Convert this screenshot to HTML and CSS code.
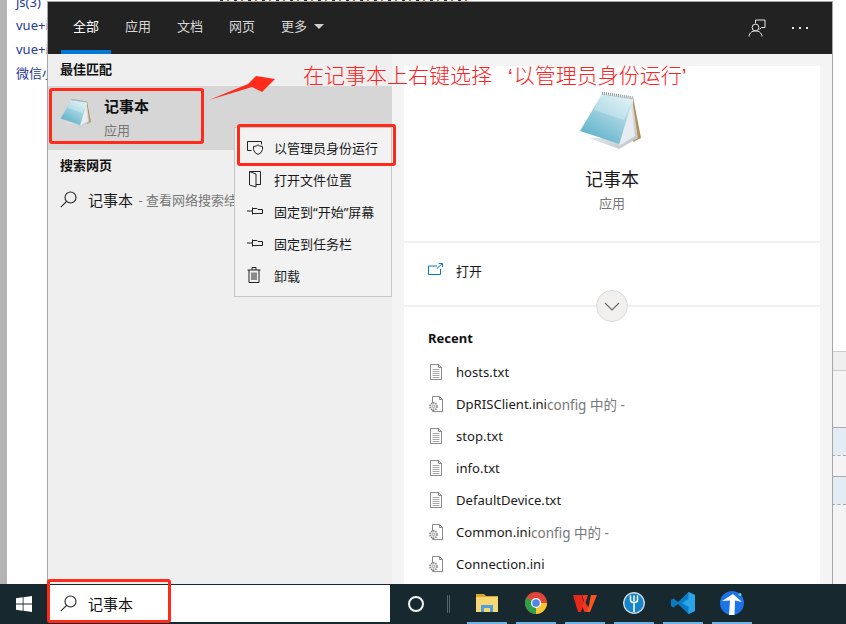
FILE: index.html
```html
<!DOCTYPE html>
<html lang="zh-CN">
<head>
<meta charset="utf-8">
<title>记事本</title>
<link rel="stylesheet" href="styles.css">
</head>
<body>
<svg class="defs" aria-hidden="true">
  <defs>
    <linearGradient id="pad" x1="0.85" y1="0" x2="0.2" y2="1">
      <stop offset="0" stop-color="#d5edf3"/>
      <stop offset="0.45" stop-color="#9dd0df"/>
      <stop offset="1" stop-color="#5aaec8"/>
    </linearGradient>
    <linearGradient id="sheet" x1="0" y1="0" x2="1" y2="1">
      <stop offset="0" stop-color="#ffffff"/>
      <stop offset="1" stop-color="#b9c2c7"/>
    </linearGradient>
    <symbol id="notepad" viewBox="10 12 62 58">
      <path d="M64 17 L72 58 L64 62 Z" fill="#b08f50"/>
      <path d="M63 18 L69 58 L50 69 L20 58 L46 58 Z" fill="url(#sheet)"/>
      <path d="M62 24 L66 56 L50 66 Z" fill="#e6ecef"/>
      <path d="M33 14 L64 19 L50 64 Q30 57 11 51 Z" fill="url(#pad)"/>
      <path d="M33 14 L64 19 L55 40 L25 30 Z" fill="#ffffff" opacity=".28"/>
      <path d="M33 13 L64 18" stroke="#8c9296" stroke-width="3" stroke-dasharray="1 1"/>
    </symbol>
    <symbol id="doc" viewBox="0 0 14 16">
      <path d="M1.5 .5H9.500L12.500 3.500V15.500H1.500Z M9.500 .5V3.500H12.500" fill="#fff" stroke="#8b8b8b"/>
      <path d="M3.500 5.500H10.500M3.500 7.500H10.500M3.500 9.500H10.500M3.500 11.500H10.500M3.500 13.500H10.500" stroke="#a8a8a8"/>
    </symbol>
    <symbol id="cfg" viewBox="0 0 16 16">
      <path d="M4.500 .5H11.500L14.500 3.500V15.500H4.500Z M11.500 .5V3.500H14.500" fill="#fff" stroke="#8b8b8b"/>
      <circle cx="5.500" cy="10.500" r="3.600" fill="#e3e3e3" stroke="#8a8a8a" stroke-width="1.600" stroke-dasharray="1.400 .9"/>
      <circle cx="5.500" cy="10.500" r="1.200" fill="#fff" stroke="#8a8a8a" stroke-width=".7"/>
    </symbol>
    <symbol id="search" viewBox="0 0 17 17">
      <circle cx="10.500" cy="6.500" r="5.500" fill="none" stroke="currentColor" stroke-width="1.100"/>
      <path d="M6.600 10.400 L.8 16.200" stroke="currentColor" stroke-width="1.100"/>
    </symbol>
    <symbol id="pin" viewBox="0 0 16 16">
      <path d="M0 8H5.500M5.500 4.500V11.500M5.500 5.500H10L11 6.500H15.500V10.500H11L10 10.500H5.500" fill="none" stroke="#222" stroke-width="1"/>
    </symbol>
  </defs>
</svg>

<div class="screen">
  <div class="desktop">
    <div class="behind-top"></div>
    <div class="behind-left">
      <span class="behind-link first">js(3)</span>
      <span class="behind-link">vue+i</span>
      <span class="behind-link">vue+i</span>
      <span class="behind-link">微信小</span>
    </div>
    <div class="behind-right">
      <div class="band-head"></div>
      <div class="band-blue"></div>
      <div class="band-blue second"></div>
    </div>

    <section class="win">
      <header class="win-head">
        <nav class="tabs">
          <span class="tab active">全部</span>
          <span class="tab">应用</span>
          <span class="tab">文档</span>
          <span class="tab">网页</span>
          <span class="tab more">更多<i class="caret"></i></span>
        </nav>
        <div class="head-actions">
          <svg class="feedback" viewBox="0 0 18 18" width="18" height="18">
            <path d="M7.500 4.500V1H17V8.500H13.500L11.500 10.500" fill="none" stroke="#e6e6e6" stroke-width="1"/>
            <circle cx="7.500" cy="8.500" r="3.400" fill="#222" stroke="#e6e6e6" stroke-width="1"/>
            <path d="M1 17.500C1.500 13.500 4 12 7.500 12S13.500 13.500 14 17.500" fill="none" stroke="#e6e6e6" stroke-width="1"/>
          </svg>
          <span class="dots"><i></i><i></i><i></i></span>
        </div>
      </header>
      <div class="win-body">
        <aside class="left">
          <h2 class="left-title">最佳匹配</h2>
          <div class="best">
            <svg class="best-icon"><use href="#notepad"/></svg>
            <div class="best-text">
              <strong>记事本</strong>
              <span>应用</span>
            </div>
          </div>
          <h2 class="left-title web">搜索网页</h2>
          <div class="web-row">
            <svg class="search-icon"><use href="#search"/></svg>
            <span class="web-name">记事本</span><span class="web-sub"> - 查看网络搜索结果</span>
          </div>
        </aside>
        <main class="right">
          <div class="card">
            <div class="hero">
              <svg class="hero-icon"><use href="#notepad"/></svg>
              <div class="hero-name">记事本</div>
              <div class="hero-sub">应用</div>
            </div>
            <div class="open-row">
              <svg class="open-icon" viewBox="0 0 15 12" width="15" height="12">
                <path d="M9 3H.5V11.500H12.500V6" fill="none" stroke="#0078d4" stroke-width="1"/>
                <path d="M9 5.500L14 .7M10.800 .5H14.500V4.200" fill="none" stroke="#0078d4" stroke-width="1"/>
              </svg>
              <span>打开</span>
              <div class="expand">
                <svg viewBox="0 0 16 9" width="16" height="9"><path d="M1 1L8 8L15 1" fill="none" stroke="#666" stroke-width="1.100"/></svg>
              </div>
            </div>
            <div class="recent">
              <h3>Recent</h3>
              <ul class="files">
                <li><svg class="fi"><use href="#doc"/></svg><span>hosts.txt</span></li>
                <li><svg class="fi"><use href="#cfg"/></svg><span>DpRISClient.ini</span><em>config 中的 -</em></li>
                <li><svg class="fi"><use href="#doc"/></svg><span>stop.txt</span></li>
                <li><svg class="fi"><use href="#doc"/></svg><span>info.txt</span></li>
                <li><svg class="fi"><use href="#doc"/></svg><span>DefaultDevice.txt</span></li>
                <li><svg class="fi"><use href="#cfg"/></svg><span>Common.ini</span><em>config 中的 -</em></li>
                <li><svg class="fi"><use href="#cfg"/></svg><span>Connection.ini</span></li>
              </ul>
            </div>
          </div>
        </main>
      </div>
    </section>

    <div class="menu">
      <div class="menu-item">
        <svg viewBox="0 0 16 16" width="16" height="16"><path d="M4.500 11.500H.5V2.500H14.500V5.500" fill="none" stroke="#222"/><path d="M6.500 7.500Q9.500 7.500 11 5.800Q12.500 7.500 15.500 7.500V10.500Q15 14 11 15.500Q7 14 6.500 10.500Z" fill="#f2f2f2" stroke="#222"/></svg>
        <span>以管理员身份运行</span>
      </div>
      <div class="menu-item">
        <svg viewBox="0 0 16 18" width="16" height="18"><path d="M2.500 1.500H13.500V14.500H9V17L2.500 15Z M2.500 1.500L9 4V15" fill="none" stroke="#222"/></svg>
        <span>打开文件位置</span>
      </div>
      <div class="menu-item">
        <svg width="16" height="16"><use href="#pin"/></svg>
        <span>固定到“开始”屏幕</span>
      </div>
      <div class="menu-item">
        <svg width="16" height="16"><use href="#pin"/></svg>
        <span>固定到任务栏</span>
      </div>
      <div class="menu-item">
        <svg viewBox="0 0 14 17" width="14" height="17"><path d="M.5 3.500H13.500M5 3.500V1H9V3.500M2 3.500V16H12V3.500M5 6V13.500M7 6V13.500M9 6V13.500" fill="none" stroke="#222"/></svg>
        <span>卸载</span>
      </div>
    </div>
  </div>

  <footer class="taskbar">
    <div class="start">
      <svg viewBox="0 0 16 16" width="16" height="16"><path d="M0 2.300L6.700 1.300V7.600H0Z M7.500 1.200L16 0V7.600H7.500Z M0 8.400H6.700V14.700L0 13.700Z M7.500 8.400H16V16L7.500 14.800Z" fill="#fff"/></svg>
    </div>
    <div class="search-box">
      <svg class="search-icon"><use href="#search"/></svg>
      <span>记事本</span>
    </div>
    <div class="cortana"><i></i></div>
    <div class="sep"></div>
    <div class="apps">
      <div class="app">
        <svg viewBox="0 0 22 20" width="22" height="20"><path d="M0 1H8L10 3H22V6H0Z" fill="#d9a62e"/><rect y="4" width="22" height="15" fill="#f7d774"/><path d="M5 19V12H17V19H14V15H8V19Z" fill="#4a9fdc"/></svg>
      </div>
      <div class="app">
        <svg viewBox="0 0 22 22" width="22" height="22"><circle cx="11" cy="11" r="11" fill="#e0463a"/><path d="M11 11L1.500 5.500A11 11 0 0 0 11 22L16.500 12Z" fill="#2f9e48"/><path d="M11 11H22A11 11 0 0 1 11 22Z" fill="#f6c72f"/><circle cx="11" cy="11" r="5" fill="#fff"/><circle cx="11" cy="11" r="3.800" fill="#4f86e8"/></svg>
      </div>
      <div class="app">
        <svg viewBox="0 0 24 20" width="24" height="20"><path d="M0 2H8.500L11 10L8 19H5Z" fill="#e8281c"/><path d="M9 2H15L12.500 10L16 15L14 19H11.500L9 13L11 8Z" fill="#f0381e"/><path d="M24 2L17 19H14L16 12L18 2Z" fill="#f9561d"/></svg>
      </div>
      <div class="app">
        <svg viewBox="0 0 22 22" width="22" height="22"><circle cx="11" cy="11" r="10.300" fill="#1685c8" stroke="#c7d3da" stroke-width="1.500"/><path d="M11 20V10M7.500 3.500V8Q7.500 10.500 11 10.500Q14.500 10.500 14.500 8V3.500" fill="none" stroke="#fff" stroke-width="1.500"/><path d="M11 3.500V9" stroke="#fff" stroke-width="1.500"/></svg>
      </div>
      <div class="app">
        <svg viewBox="0 0 24 24" width="24" height="24"><path d="M17.500 1L24 4V20L17.500 23L7 13L2.500 16.500L0 15V9L2.500 7.500L7 11L17.500 1Z" fill="#0a7cc4"/><path d="M17.500 1L24 4V20L17.500 23V16L11 12L17.500 8Z" fill="#2aa3e8"/></svg>
      </div>
      <div class="app">
        <svg viewBox="0 0 24 24" width="24" height="24"><circle cx="12" cy="12" r="12" fill="#1c74e8"/><path d="M2 10L13 3L22 11L15 9.500L14.500 24H9L10 9.500Z" fill="#fff"/><circle cx="20" cy="3.500" r="1.500" fill="#4fd0e8"/></svg>
      </div>
    </div>
  </footer>

  <svg class="arrow" viewBox="0 0 70 30" width="70" height="30"><path d="M1 25L40 9L48 1L67 4L54 17L44 12Z" fill="#ff2a1a"/></svg>
  <div class="note">在记事本上右键选择<span class="quote open">‘</span>以管理员身份运行<span class="quote">’</span></div>
  <div class="mark mark-best"></div>
  <div class="mark mark-menu"></div>
  <div class="mark mark-search"></div>
</div>
</body>
</html>
```
FILE: styles.css
```css
* { box-sizing: border-box; margin: 0; padding: 0; }
html, body { width: 846px; height: 624px; overflow: hidden; }
body {
  font-family: "Noto Sans", "Noto Sans CJK SC", sans-serif;
  font-size: 13px;
  color: #1a1a1a;
  background: #fff;
}
.defs { position: absolute; width: 0; height: 0; }
.screen { position: relative; width: 846px; height: 624px; display: flex; flex-direction: column; overflow: hidden; }
.desktop { position: relative; flex: 1; background: #fff; }

/* page behind the search window */
.behind-top {
  position: absolute; left: 220px; top: 0; width: 250px; height: 2px;
  background: repeating-linear-gradient(90deg, #333 0 3px, #fff 3px 7px, #a8702a 7px 9px, #fff 9px 14px);
}
.behind-left {
  position: absolute; left: 0; top: 0; width: 48px; height: 100%;
  border-left: 7px solid #b4b4b4;
  padding-left: 9px;
  display: flex; flex-direction: column;
  overflow: hidden; white-space: nowrap;
}
.behind-link { height: 24px; line-height: 24px; font-size: 13px; color: #26389a; flex: none; }
.behind-link.first { margin-top: -10px; margin-bottom: -1px; }
.behind-right {
  position: absolute; left: 832px; top: 351px; width: 14px;
  display: flex; flex-direction: column;
  background: #f4f4f4;
  height: 233px;
}
.band-head { height: 20px; background: #efefef; border-top: 1px solid #ccc; border-bottom: 1px solid #ccc; }
.band-blue { margin-top: 56px; height: 29px; background: #e3ebf5; border-top: 1px solid #aaa; border-bottom: 1px dashed #aaa; }
.band-blue.second { margin-top: 20px; }

/* search window */
.win {
  position: absolute; left: 47px; top: 1px; width: 786px; height: 583px;
  border: 1px solid #a6a6a6; border-bottom: 0;
  display: flex; flex-direction: column;
  background: #f4f4f4;
}
.win-head { height: 52px; background: #222; display: flex; justify-content: space-between; flex: none; }
.tabs { display: flex; padding-left: 13px; }
.tab {
  position: relative; width: 52px; padding-top: 15px; text-align: center;
  line-height: 18px; color: #d6d6d6; font-size: 13px; white-space: nowrap;
}
.tab.active { color: #fff; width: 50px; margin-right: 1px; border-bottom: 4px solid #0078d4; }
.tab.more { text-align: left; padding-left: 13px; width: 70px; }
.caret {
  display: inline-block; margin-left: 7px; vertical-align: 2px;
  border-left: 5px solid transparent; border-right: 5px solid transparent; border-top: 5px solid #cfcfcf;
}
.head-actions { display: flex; align-items: center; gap: 26px; padding-right: 24px; }
.dots { display: flex; gap: 5px; }
.dots i { width: 2px; height: 2px; background: #e6e6e6; }

.win-body { flex: 1; display: flex; min-height: 0; }
.left { width: 344px; background: #efefef; flex: none; }
.left-title { font-size: 13px; font-weight: 700; line-height: 20px; padding: 5px 0 0 12px; height: 32px; color: #111; }
.left-title.web { height: 33px; }
.best { height: 64px; background: #d6d6d6; display: flex; padding: 13px 0 0 12px; gap: 13px; }
.best-icon { width: 31px; height: 29px; }
.best-text { display: flex; flex-direction: column; margin-top: -4px; }
.best-text strong { font-size: 15px; line-height: 22px; color: #111; }
.best-text span { margin-top: 2px; line-height: 22px; color: #777; font-size: 13px; }
.web-row { display: flex; align-items: center; height: 32px; padding-left: 12px; white-space: nowrap; overflow: hidden; }
.search-icon { width: 17px; height: 17px; color: #222; flex: none; }
.web-name { margin-left: 11px; font-size: 15px; color: #1a1a1a; }
.web-sub { color: #777; white-space: pre; margin-left: 2px; }

.right { flex: 1; padding: 12px 12px 0; min-width: 0; }
.card { background: #fff; height: 100%; overflow: hidden; }
.hero { height: 177px; display: flex; flex-direction: column; align-items: center; padding-top: 26px; border-bottom: 2px solid #f0f0f0; }
.hero-icon { width: 62px; height: 58px; flex: none; margin-left: -5px; }
.hero-name { margin-top: 16px; font-size: 18px; line-height: 26px; color: #1a1a1a; }
.hero-sub { margin-top: 1px; font-size: 13px; line-height: 20px; color: #777; }
.open-row {
  position: relative; height: 64px; display: flex; align-items: center; gap: 13px;
  padding-left: 24px; border-bottom: 2px solid #f0f0f0; padding-bottom: 8px;
}
.open-icon { margin-top: -2px; }
.expand {
  position: absolute; left: 192px; bottom: -17px; width: 32px; height: 32px; border-radius: 50%;
  background: #f1f0ee; border: 1px solid #dcdcdc;
  display: flex; align-items: center; justify-content: center; z-index: 1;
}
.recent { padding: 21px 24px 0; }
.recent h3 { font-size: 13px; font-weight: 700; line-height: 20px; color: #111; font-family: "Noto Sans", sans-serif; }
.files { list-style: none; margin-top: 8px; }
.files li { height: 32px; display: flex; align-items: center; white-space: nowrap; color: #1a1a1a; font-size: 13.1px; }
.fi { width: 16px; height: 16px; margin-right: 12px; flex: none; }
.files em { font-style: normal; color: #777; font-size: 13.5px; }

/* context menu */
.menu {
  position: absolute; left: 234px; top: 127px; width: 158px; height: 170px;
  background: #f2f2f2; border: 1px solid #c6c6c6; padding-top: 3px;
}
.menu-item { height: 32px; display: flex; align-items: center; position: relative; padding-left: 40px; color: #1a1a1a; white-space: nowrap; }
.menu-item span { margin-left: -1px; }
.menu-item svg { position: absolute; left: 12px; top: 50%; transform: translateY(-50%); }

/* taskbar */
.taskbar { height: 40px; flex: none; background: #18282f; display: flex; align-items: flex-start; position: relative; }
.start { width: 50px; height: 40px; padding-left: 16px; display: flex; align-items: center; }
.search-box { width: 340px; height: 37px; margin-top: 1px; background: #fff; display: flex; align-items: center; padding-left: 10px; gap: 11px; font-size: 15px; color: #111; }
.cortana { width: 52px; height: 40px; display: flex; align-items: center; justify-content: center; }
.cortana i { width: 16px; height: 16px; border: 2.500px solid #f2f2f2; border-radius: 50%; }
.sep { width: 3px; height: 18px; margin: 11px 0 0 5px; border-left: 1px solid #55646b; border-right: 1px solid #55646b; }
.apps { display: flex; gap: 9px; margin-left: 17px; }
.app { width: 40px; height: 40px; display: flex; align-items: center; justify-content: center; border-bottom: 2px solid #6db3e6; }

/* annotations laid over the screenshot */
.arrow { position: absolute; left: 208px; top: 75px; }
.note {
  position: absolute; left: 303px; top: 62px;
  font-family: "Liberation Sans", "Noto Sans CJK SC", sans-serif;
  font-size: 21px; line-height: 28px; font-weight: 300; color: #ff2020; white-space: nowrap;
}
.quote.open { margin-left: 16px; margin-right: 1px; }
.mark { position: absolute; border: 3px solid #ff2a1a; border-radius: 3px; }
.mark-best { left: 49px; top: 88px; width: 155px; height: 56px; }
.mark-menu { left: 237px; top: 124px; width: 159px; height: 42px; }
.mark-search { left: 47px; top: 579px; width: 124px; height: 44px; }
```
